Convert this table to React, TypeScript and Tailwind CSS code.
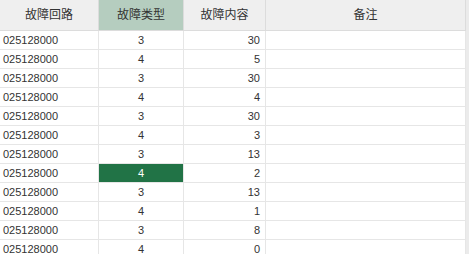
import React from 'react';

const rows: [string, number, number][] = [
  ['025128000', 3, 30],
  ['025128000', 4, 5],
  ['025128000', 3, 30],
  ['025128000', 4, 4],
  ['025128000', 3, 30],
  ['025128000', 4, 3],
  ['025128000', 3, 13],
  ['025128000', 4, 2],
  ['025128000', 3, 13],
  ['025128000', 4, 1],
  ['025128000', 3, 8],
  ['025128000', 4, 0],
];

const SELECTED_ROW = 7;

export default function App() {
  return (
    <div
      className="flex w-[469px] h-[254px] overflow-hidden bg-white text-[#333]"
      style={{ fontFamily: '"Liberation Sans", "Noto Sans CJK SC", sans-serif' }}
    >
      <div className="w-[466px] shrink-0">
        <div className="grid grid-cols-[99px_85px_82px_200px] h-[31px] bg-[#efefef] text-[12px]" style={{ fontFamily: '"Noto Sans CJK SC", sans-serif' }}>
          <div className="flex items-center justify-center border-r border-b border-[#dcdcdc] pb-[2px]">故障回路</div>
          <div className="flex items-center justify-center border-r border-b border-[#dcdcdc] bg-[#b5cdbf] pb-[2px]">故障类型</div>
          <div className="flex items-center justify-center border-r border-b border-[#dcdcdc] pb-[2px]">故障内容</div>
          <div className="flex items-center justify-center border-r border-b border-[#dcdcdc] pb-[2px]">备注</div>
        </div>

        {rows.map(([loop, type, content], i) => (
          <div key={i} className="grid grid-cols-[99px_85px_82px_200px] h-[19px] text-[11px]">
            <div className="flex items-center pl-[3px] border-r border-b border-[#e6e6e6]">{loop}</div>
            <div
              className={
                i === SELECTED_ROW
                  ? 'flex items-center justify-center border-r border-b border-[#e6e6e6] bg-[#217346] text-white'
                  : 'flex items-center justify-center border-r border-b border-[#e6e6e6]'
              }
            >
              {type}
            </div>
            <div className="flex items-center justify-end pr-[5px] border-r border-b border-[#e6e6e6]">{content}</div>
            <div className="border-r border-b border-[#e6e6e6]" />
          </div>
        ))}
      </div>
      <div className="w-[3px] h-full bg-[#ebebeb]" />
    </div>
  );
}
